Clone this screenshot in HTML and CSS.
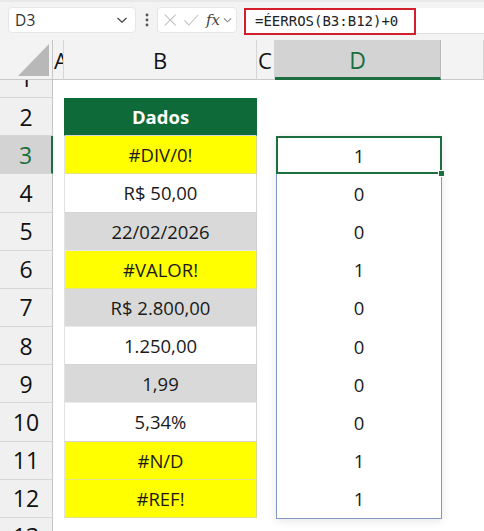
FILE: index.html
```html
<!DOCTYPE html>
<html lang="pt-BR">
<head>
<meta charset="utf-8">
<title>ÉERROS</title>
<link rel="stylesheet" href="styles.css">
</head>
<body>
<div class="app">
  <div class="toolbar">
    <div class="namebox">
      <span class="nb-text">D3</span>
      <svg class="chev" width="12" height="8" viewBox="0 0 12 8"><path d="M1.5 2 L6 6.2 L10.5 2" fill="none" stroke="#444" stroke-width="1.3"/></svg>
    </div>
    <div class="kebab">
      <svg width="4" height="14" viewBox="0 0 4 14"><circle cx="2" cy="2" r="1.4" fill="#555"/><circle cx="2" cy="7" r="1.4" fill="#555"/><circle cx="2" cy="12" r="1.4" fill="#555"/></svg>
    </div>
    <div class="fxbox">
      <svg width="16" height="16" viewBox="0 0 16 16"><path d="M2 2 L14 14 M14 2 L2 14" stroke="#c2c2c2" stroke-width="1.2" fill="none"/></svg>
      <svg width="18" height="16" viewBox="0 0 18 16"><path d="M1.5 8.5 L6.5 13.5 L16.5 2.5" stroke="#c2c2c2" stroke-width="1.2" fill="none"/></svg>
      <span class="fx">fx</span>
      <svg class="chev" width="10" height="8" viewBox="0 0 10 8"><path d="M1 2.2 L5 6 L9 2.2" fill="none" stroke="#888" stroke-width="1.2"/></svg>
    </div>
    <div class="formula">
      <span class="ftext">=ÉERROS(B3:B12)+0</span>
    </div>
  </div>

  <div class="sheet">
    <div class="col col-rh">
      <div class="hdr corner"><div class="tri"></div></div>
      <div class="rh r1"><span>1</span></div>
      <div class="rh rr">2</div>
      <div class="rh rr sel">3</div>
      <div class="rh rr">4</div>
      <div class="rh rr">5</div>
      <div class="rh rr">6</div>
      <div class="rh rr">7</div>
      <div class="rh rr">8</div>
      <div class="rh rr">9</div>
      <div class="rh rr">10</div>
      <div class="rh rr">11</div>
      <div class="rh rr">12</div>
      <div class="rh r13"><span>13</span></div>
    </div>

    <div class="col col-a">
      <div class="hdr hdr-clip"><span class="hl">A</span></div>
    </div>

    <div class="col col-b">
      <div class="hdr"><span class="hl">B</span></div>
      <div class="c r1"></div>
      <div class="c rr t-head">Dados</div>
      <div class="c rr t-yel">#DIV/0!</div>
      <div class="c rr t-wht">R$ 50,00</div>
      <div class="c rr t-gry">22/02/2026</div>
      <div class="c rr t-yel">#VALOR!</div>
      <div class="c rr t-gry">R$ 2.800,00</div>
      <div class="c rr t-wht">1.250,00</div>
      <div class="c rr t-gry">1,99</div>
      <div class="c rr t-wht">5,34%</div>
      <div class="c rr t-yel">#N/D</div>
      <div class="c rr t-yel">#REF!</div>
    </div>

    <div class="col col-c">
      <div class="hdr hdr-clip"><span class="hl">C</span></div>
    </div>

    <div class="col col-d">
      <div class="hdr hdr-sel"><span class="hl">D</span></div>
      <div class="c r1"></div>
      <div class="c rr"></div>
      <div class="dbox">
        <div class="c rr d-val active">1<span class="handle"></span></div>
        <div class="c rr d-val">0</div>
        <div class="c rr d-val">0</div>
        <div class="c rr d-val">1</div>
        <div class="c rr d-val">0</div>
        <div class="c rr d-val">0</div>
        <div class="c rr d-val">0</div>
        <div class="c rr d-val">0</div>
        <div class="c rr d-val">1</div>
        <div class="c rr d-val">1</div>
      </div>
    </div>

    <div class="col col-e">
      <div class="hdr"></div>
    </div>
  </div>
</div>
</body>
</html>
```

FILE: styles.css
```css
* { box-sizing: border-box; }
html, body { margin: 0; padding: 0; }
body {
  width: 484px;
  height: 531px;
  overflow: hidden;
  background: #ffffff;
  font-family: "Open Sans", "Noto Sans", sans-serif;
  color: #1a1a1a;
}
.app { width: 484px; height: 531px; overflow: hidden; }

/* ---------- toolbar ---------- */
.toolbar {
  height: 40px;
  background: #f3f3f3;
  border-top: 2px solid #e9e9e9;
  display: flex;
  align-items: flex-start;
  padding: 5px 0 0 8px;
}
.namebox {
  width: 128px;
  height: 26px;
  background: #fff;
  border-radius: 4px;
  border: 1px solid #e6e6e6;
  display: flex;
  align-items: center;
  justify-content: space-between;
  padding: 0 7px 0 6px;
}
.nb-text { font-size: 15.5px; color: #333; letter-spacing: 0.2px; }
.kebab {
  width: 21px;
  height: 26px;
  display: flex;
  align-items: center;
  justify-content: center;
}
.fxbox {
  width: 80px;
  height: 26px;
  background: #fff;
  border-radius: 4px;
  border: 1px solid #e6e6e6;
  display: flex;
  align-items: center;
  gap: 5px;
  padding: 0 4px 0 5px;
}
.fx {
  font-family: "DejaVu Serif", "Liberation Serif", serif;
  font-style: italic;
  font-size: 15px;
  color: #444;
  margin-left: 2px;
  margin-right: -2px;
}
.formula {
  flex: 1;
  height: 26px;
  margin-left: 6px;
  margin-top: 1px;
  background: #fff;
  border-bottom: 1px solid #dcdcdc;
  display: flex;
  align-items: flex-start;
}
.ftext {
  display: block;
  width: 172px;
  height: 27px;
  margin-left: 1px;
  border: 2px solid #d21f2b;
  font-family: "DejaVu Sans Mono", "Liberation Mono", monospace;
  font-size: 14px;
  line-height: 22px;
  padding-left: 9px;
  color: #222;
}

/* ---------- sheet ---------- */
.sheet {
  display: flex;
  height: 491px;
}
.col { display: flex; flex-direction: column; }
.col-rh { width: 53px; }
.col-a { width: 11px; }
.col-b { width: 193px; }
.col-c { width: 18px; }
.col-d { width: 166px; }
.col-e { flex: 1; }

.hdr {
  height: 40px;
  flex: none;
  background: #f3f3f3;
  border-bottom: 1px solid #c9c9c9;
  border-right: 1px solid #d6d6d6;
  display: flex;
  align-items: center;
  justify-content: center;
  overflow: hidden;
}
.hl { font-size: 22px; color: #111; line-height: 1; }
.hdr-clip { justify-content: flex-start; padding-left: 1px; }
.hdr-sel {
  background: #d3d3d3;
  border-bottom: 3px solid #1c6e3e;
  border-right: 1px solid #b9b9b9;
}
.hdr-sel .hl { color: #1c6e3e; padding-top: 3px; font-size: 23px; }
.corner {
  justify-content: flex-end;
  align-items: flex-end;
  padding: 0 3px 3px 0;
  border-right: 1px solid #c6c6c6;
}
.tri {
  width: 31px;
  height: 32px;
  background: #b8b8b8;
  clip-path: polygon(100% 0, 100% 100%, 0 100%);
}

/* row headers */
.rh {
  flex: none;
  background: #f0f0f0;
  border-right: 1px solid #c6c6c6;
  border-bottom: 1px solid #d6d6d6;
  font-size: 23px;
  color: #111;
  display: flex;
  align-items: center;
  justify-content: center;
  overflow: hidden;
}
.r1 { height: 18px; flex: none; }
.rr { height: 38.18px; flex: none; }
.rh.r1 { align-items: flex-end; }
.rh.r1 span { display: block; line-height: 38px; height: 38px; flex: none; }
.r13 { flex: 1; align-items: flex-start; border-bottom: none; }
.r13 span { display: block; line-height: 38px; height: 38px; flex: none; margin-top: -1px; }
.rh.sel {
  background: #d3d3d3;
  color: #1c6e3e;
  border-right: 2px solid #1c6e3e;
}

/* cells */
.c {
  display: flex;
  align-items: center;
  justify-content: center;
  font-size: 18.5px;
  color: #1a1a1a;
}
.t-head, .t-yel, .t-wht, .t-gry {
  border-bottom: 1px solid #d4d4d4;
  border-right: 1px solid #d4d4d4;
  border-left: 1px solid #e2e2e2;
}
.t-head {
  background: #0f6a3a;
  color: #fff;
  font-weight: bold;
  border-color: #0f6a3a;
  border-bottom-color: #d4d4d4;
}
.t-yel { background: #ffff00; border-bottom-color: #e4e48a; border-right-color: #d8d890; }
.t-wht { background: #ffffff; }
.t-gry { background: #d9d9d9; border-bottom-color: #e9e9e9; border-right-color: #cfcfcf; }

.dbox {
  display: flex;
  flex-direction: column;
  margin-left: 1px;
  width: 166px;
  border-left: 1px solid #8397c2;
  border-right: 1px solid #8397c2;
  border-bottom: 1px solid #8397c2;
  box-shadow: 0 2px 9px rgba(0, 0, 0, 0.10);
  background: #fff;
}
.d-val { width: 100%; }
.active {
  position: relative;
  border: 2px solid #1c6e3e;
  margin: 0 -1px;
  width: auto;
}
.handle {
  position: absolute;
  right: -5px;
  bottom: -5px;
  width: 7px;
  height: 7px;
  background: #1c6e3e;
  border: 1px solid #fff;
}
```
